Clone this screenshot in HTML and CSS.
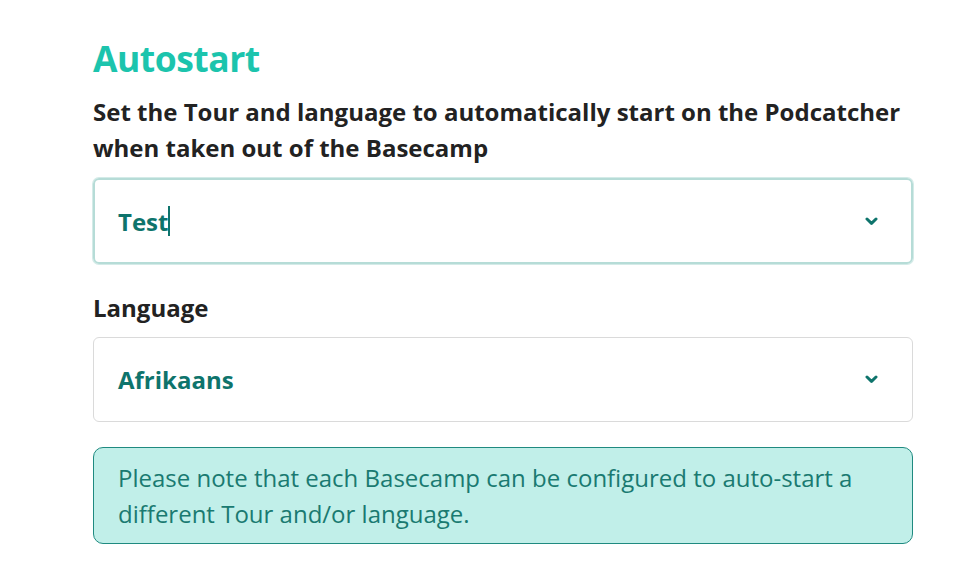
FILE: index.html
```html
<!DOCTYPE html>
<html lang="en">
<head>
    <meta charset="UTF-8">
    <title>Autostart</title>
    <meta name="viewport" content="width=device-width, initial-scale=1.0">
    <link rel="stylesheet" href="styles.css">
</head>
<body>
    <div class="panel">
        <h1 class="title">Autostart</h1>
        <label class="field-label">Set the Tour and language to automatically start on the Podcatcher when taken out of the Basecamp</label>
        <div class="select focused">
            <span class="value">Test<span class="caret"></span></span>
            <svg class="chevron" viewBox="0 0 13 9" width="13" height="9"><path d="M2 2 L6.5 6.3 L11 2" fill="none" stroke="currentColor" stroke-width="3" stroke-linecap="round" stroke-linejoin="round"/></svg>
        </div>
        <label class="field-label lang">Language</label>
        <div class="select">
            <span class="value">Afrikaans</span>
            <svg class="chevron" viewBox="0 0 13 9" width="13" height="9"><path d="M2 2 L6.5 6.3 L11 2" fill="none" stroke="currentColor" stroke-width="3" stroke-linecap="round" stroke-linejoin="round"/></svg>
        </div>
        <div class="note">Please note that each Basecamp can be configured to auto-start a different Tour and/or language.</div>
    </div>
</body>
</html>
```

FILE: styles.css
```css
body {
    margin: 0;
    background: #fff;
    font-family: 'Open Sans', 'Noto Sans', sans-serif;
    color: #222;
}
.panel {
    width: 820px;
    padding: 36px 0 0 93px;
    display: flex;
    flex-direction: column;
}
.title {
    margin: 0 0 14px;
    font-size: 35.5px;
    font-weight: 700;
    color: #1cc4ad;
    line-height: 44px;
    letter-spacing: -0.5px;
}
.field-label {
    font-size: 24px;
    font-weight: 700;
    line-height: 36px;
    color: #222;
}
.field-label.lang {
    margin-top: 26px;
}
.select {
    margin-top: 11px;
    height: 85px;
    box-sizing: border-box;
    border: 1px solid #dadada;
    border-radius: 6px;
    display: flex;
    align-items: center;
    justify-content: space-between;
    padding: 0 34px 0 24px;
    color: #0e746c;
}
.select.focused {
    margin-top: 12px;
    height: 86px;
    border: 2px solid #b6dcd7;
    box-shadow: 0 0 0 1px #d4ebe8;
    padding-left: 23px;
    padding-right: 33px;
}
.value {
    font-size: 24px;
    font-weight: 700;
    display: flex;
    align-items: center;
}
.caret {
    display: inline-block;
    width: 2px;
    height: 30px;
    background: #0e746c;
}
.chevron {
    color: #0e746c;
}
.note {
    margin-top: 25px;
    background: #c1efe9;
    border: 1px solid #1f8a80;
    border-radius: 10px;
    padding: 12px 24px 11px;
    font-size: 24px;
    line-height: 36px;
    color: #1a7a71;
}
```
